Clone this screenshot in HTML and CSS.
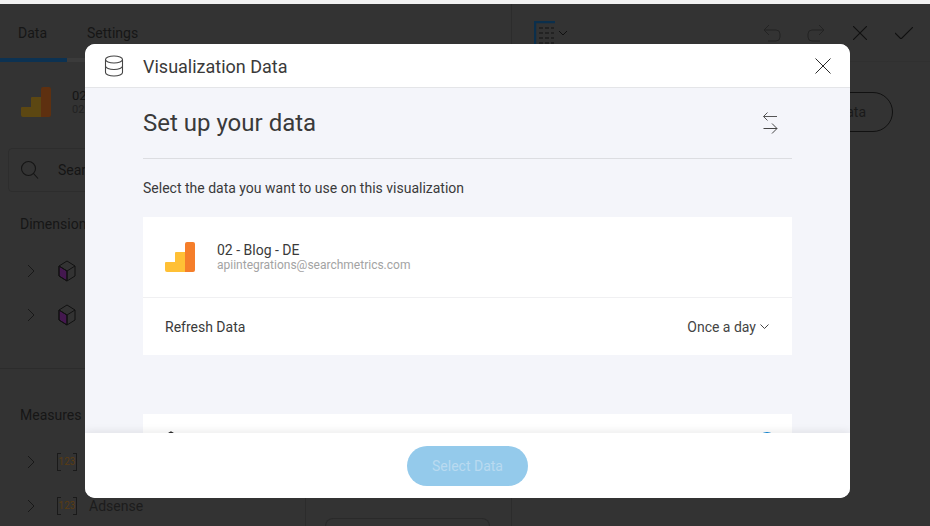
FILE: index.html
```html
<!DOCTYPE html>
<html lang="en">
<head>
<meta charset="utf-8">
<title>Visualization Data</title>
<link rel="stylesheet" href="styles.css">
</head>
<body>
<div class="topstrip"></div>
<div class="app">
  <div class="editor">
    <div class="tabs">
      <div class="tab active">Data</div>
      <div class="tab">Settings</div>
    </div>
    <div class="editor-cols">
      <aside class="left">
        <div class="source">
          <svg width="30" height="30" viewBox="0 0 30 30"><path d="M0 28v-7a1 1 0 0 1 1-1h9v-9a1 1 0 0 1 1-1h9v20H2a2 2 0 0 1-2-2z" fill="#5c4712"/><path d="M20 2a2 2 0 0 1 2-2h6a2 2 0 0 1 2 2v26a2 2 0 0 1-2 2h-8z" fill="#5e3010"/></svg>
          <div class="source-text"><div>02 - Blog - DE</div><div class="source-sub">02 - Blog</div></div>
        </div>
        <div class="search">
          <svg width="20" height="20" viewBox="0 0 20 20" fill="none" stroke="#151515" stroke-width="1.1"><circle cx="8.500" cy="8.500" r="7"/><path d="M13.500 13.500l4.500 5"/></svg>
          <span>Search</span>
        </div>
        <div class="section-title dims">Dimensions</div>
        <div class="field"><svg width="10" height="14" viewBox="0 0 10 14" fill="none" stroke="#181818"><path d="M2 1l6 6-6 6"/></svg><svg width="20" height="22" viewBox="0 0 20 22" fill="none" stroke="#111"><path d="M2 6v10l8 5V11z" fill="#44184f"/><path d="M10 1l8 5v10l-8 5-8-5V6zM2 6l8 5 8-5M10 11v10"/></svg></div>
        <div class="field"><svg width="10" height="14" viewBox="0 0 10 14" fill="none" stroke="#181818"><path d="M2 1l6 6-6 6"/></svg><svg width="20" height="22" viewBox="0 0 20 22" fill="none" stroke="#111"><path d="M2 6v10l8 5V11z" fill="#44184f"/><path d="M10 1l8 5v10l-8 5-8-5V6zM2 6l8 5 8-5M10 11v10"/></svg></div>
        <div class="rule"></div>
        <div class="section-title">Measures</div>
        <div class="field"><svg width="10" height="14" viewBox="0 0 10 14" fill="none" stroke="#181818"><path d="M2 1l6 6-6 6"/></svg><span class="num">123</span><span class="name">Adsense</span></div>
        <div class="field"><svg width="10" height="14" viewBox="0 0 10 14" fill="none" stroke="#181818"><path d="M2 1l6 6-6 6"/></svg><span class="num">123</span><span class="name">Adsense</span></div>
      </aside>
      <section class="middle"><div class="drop"></div></section>
    </div>
  </div>
  <section class="right">
    <div class="toolbar">
      <div class="chart-pick">
        <svg width="21" height="24" viewBox="0 0 21 24"><path d="M1 24V1h20" fill="none" stroke="#0b2f4c" stroke-width="2.400"/><path d="M5 7h4M11 7h4M17 7h3M5 12h4M11 12h4M17 12h3M5 17h4M11 17h4M17 17h3M5 22h4M11 22h4M17 22h3" stroke="#1e1e1e" stroke-width="1.300"/></svg>
        <svg width="10" height="6" viewBox="0 0 10 6" fill="none" stroke="#111"><path d="M1 1l4 4 4-4"/></svg>
      </div>
      <div class="actions">
        <svg class="a-undo" width="18" height="18" viewBox="0 0 18 18" fill="none" stroke="#232323"><path d="M1 6h12a4 4 0 0 1 4 4v3a4 4 0 0 1-4 4H5M6 1L1 6l5 5"/></svg>
        <svg class="a-redo" width="18" height="18" viewBox="0 0 18 18" fill="none" stroke="#232323"><path d="M17 6H5a4 4 0 0 0-4 4v3a4 4 0 0 0 4 4h8M12 1l5 5-5 5"/></svg>
        <svg class="a-close" width="14" height="14" viewBox="0 0 14 14" fill="none" stroke="#101010" stroke-width="1.100"><path d="M0 0l14 14M14 0L0 14"/></svg>
        <svg class="a-check" width="18" height="12" viewBox="0 0 18 12" fill="none" stroke="#101010" stroke-width="1.100"><path d="M0 6l6 6L18 0"/></svg>
      </div>
    </div>
    <div class="add-row"><div class="ghost-btn">Select Data</div></div>
  </section>
</div>

<div class="modal">
  <header class="modal-head">
    <svg width="20" height="22" viewBox="0 0 20 22" fill="none" stroke="#444" stroke-width="1.100"><ellipse cx="10" cy="4.500" rx="8.500" ry="3.500"/><path d="M1.500 4.500v13c0 2 3.800 3.500 8.500 3.500s8.500-1.500 8.500-3.500v-13M1.500 11c0 2 3.800 3.500 8.500 3.500s8.500-1.500 8.500-3.500"/></svg>
    <h1 class="modal-title">Visualization Data</h1>
    <svg width="16" height="16" viewBox="0 0 16 16" fill="none" stroke="#2a2a2a"><path d="M.5.500l15 15M15.500.500l-15 15"/></svg>
  </header>
  <div class="modal-body">
    <div class="setup-head">
      <h2 class="setup-title">Set up your data</h2>
      <svg width="16" height="22" viewBox="0 0 16 22" fill="none" stroke="#555"><path d="M15 4.500H1.500M5.500.500l-4 4 4 4"/><path stroke="#444" d="M1.500 16.500h13.500M10 11.500l5 5-5 5"/></svg>
    </div>
    <p class="hint">Select the data you want to use on this visualization</p>
    <div class="card">
      <div class="account">
        <svg width="30" height="30" viewBox="0 0 30 30"><path d="M0 28v-7a1 1 0 0 1 1-1h9v-9a1 1 0 0 1 1-1h9v20H2a2 2 0 0 1-2-2z" fill="#ffc035"/><path d="M20 2a2 2 0 0 1 2-2h6a2 2 0 0 1 2 2v26a2 2 0 0 1-2 2h-8z" fill="#f57e2a"/></svg>
        <div>
          <div class="account-name">02 - Blog - DE</div>
          <div class="account-mail">apiintegrations@searchmetrics.com</div>
        </div>
      </div>
      <div class="refresh">
        <span>Refresh Data</span>
        <span class="refresh-val">Once a day <svg width="9" height="5" viewBox="0 0 9 5" fill="none" stroke="#444"><path d="M.5.500l4 4 4-4"/></svg></span>
      </div>
    </div>
    <div class="card second">
      <svg width="12" height="14" viewBox="0 0 12 14" fill="none" stroke="#222" stroke-width="1.300"><path d="M6 1l5 3v6l-5 3-5-3V4z"/></svg>
      <span class="radio"></span>
    </div>
  </div>
  <footer class="modal-foot">
    <button class="primary">Select Data</button>
  </footer>
</div>
</body>
</html>
```
FILE: styles.css
```css
* { box-sizing: border-box; }
html, body { margin: 0; height: 100%; }
body {
  background: #333;
  font-family: Roboto, "Liberation Sans", sans-serif;
  color: #151515;
  overflow: hidden;
  width: 930px;
  height: 526px;
}
svg { display: block; flex: none; }
.topstrip { height: 4px; background: #f2f2f2; }
.app { display: flex; height: 522px; overflow: hidden; }
.editor { width: 512px; flex: none; border-right: 1px solid #2c2c2c; }
.editor-cols { display: flex; height: 464px; overflow: hidden; }
.left { width: 306px; flex: none; border-right: 1px solid #2c2c2c; }
.middle { flex: 1; padding: 456px 21px 0 19px; overflow: hidden; }
.drop { height: 8px; border: 1px solid #2a2a2a; border-bottom: 0; border-radius: 8px 8px 0 0; }
.right { flex: 1; }
.tabs { display: flex; height: 58px; border-bottom: 4px solid #3b3b3b; font-size: 14px; }
.tab { padding: 21px 18px 0; color: #161616; }
.tab.active { width: 67px; border-bottom: 4px solid #0c3252; margin-bottom: -4px; height: 58px; }
.tab + .tab { padding-left: 20px; }
.source { display: flex; gap: 21px; padding: 25px 0 0 21px; height: 86px; font-size: 13px; align-items: flex-start; }
.source-text { margin-top: 1px; }
.source-sub { font-size: 11px; color: #222; }
.search { margin: 0 0 0 8px; height: 44px; width: 280px; border: 1px solid #2d2d2d; border-radius: 4px; display: flex; align-items: center; gap: 18px; padding-left: 11px; font-size: 14px; }
.section-title { font-size: 14px; color: #161616; padding-left: 20px; }
.dims { margin-top: 24px; }
.field { display: flex; align-items: center; height: 44px; padding-left: 26px; gap: 21px; font-size: 14px; color: #1c1c1c; }
.dims + .field { margin-top: 17px; }
.rule { height: 1px; background: #2c2c2c; margin: 31px 0 38px; }
.rule + .section-title + .field { margin-top: 17px; }
.num { position: relative; font-size: 10px; color: #5a3c12; width: 20px; height: 18px; line-height: 18px; text-align: center; }
.num::before, .num::after { content: ""; position: absolute; top: 0; bottom: 0; width: 3px; border: 1px solid #1a1a1a; }
.num::before { left: 0; border-right: 0; }
.num::after { right: 0; border-left: 0; }
.name { margin-left: -9px; }
.toolbar { display: flex; justify-content: space-between; align-items: center; height: 58px; padding: 0 17px 0 22px; border-bottom: 1px solid #303030; }
.chart-pick { display: flex; align-items: center; gap: 3px; }
.actions { display: flex; align-items: center; gap: 26px; }
.a-close { margin-left: 2px; }
.a-check { margin-left: 2px; }
.add-row { display: flex; justify-content: flex-end; padding: 30px 37px 0 0; }
.ghost-btn { border: 1px solid #111; border-radius: 20px; height: 40px; padding: 0 26px; font-size: 14px; line-height: 38px; color: #1a1a1a; }

.modal {
  position: absolute;
  left: 85px;
  top: 44px;
  width: 765px;
  height: 454px;
  border-radius: 10px;
  background: #f4f5fa;
  overflow: hidden;
  display: flex;
  flex-direction: column;
}
.modal-head {
  height: 44px;
  flex: none;
  background: #fff;
  border-bottom: 1px solid #e4e5e8;
  display: flex;
  align-items: center;
  padding: 0 19px;
}
.modal-title { margin: 2px 0 0 19px; flex: 1; font-size: 18px; font-weight: 400; color: #3a3a3a; }
.modal-body { flex: 1; min-height: 0; overflow: hidden; padding: 0 58px; }
.setup-head { display: flex; justify-content: space-between; align-items: center; height: 71px; border-bottom: 1px solid #dcdde1; padding-right: 14px; }
.setup-title { margin: 0; font-size: 24px; font-weight: 400; color: #3a3a3a; }
.hint { margin: 21px 0 21px; font-size: 14px; line-height: 16px; color: #3a3a3a; }
.card { background: #fff; }
.account { display: flex; align-items: center; gap: 22px; height: 81px; padding: 0 0 0 22px; border-bottom: 1px solid #f0f0f2; }
.account-name { font-size: 14px; line-height: 16px; color: #3a3a3a; }
.account-mail { font-size: 12px; line-height: 14px; color: #a3a3a3; }
.refresh { display: flex; justify-content: space-between; align-items: center; height: 57px; padding: 0 23px 0 22px; font-size: 14px; color: #3a3a3a; }
.refresh-val { display: flex; align-items: center; gap: 4px; color: #444; }
.second { margin-top: 59px; height: 60px; display: flex; justify-content: space-between; padding: 17px 16px 0 22px; }
.radio { width: 18px; height: 18px; margin-top: 1px; border: 1.5px solid #0a84d6; border-radius: 50%; }
.modal-foot {
  height: 65px;
  flex: none;
  background: #fff;
  box-shadow: 0 -2px 8px rgba(0,0,0,.08);
  display: flex;
  justify-content: center;
  align-items: center;
  position: relative;
}
.primary {
  width: 121px;
  height: 40px;
  border: 0;
  border-radius: 20px;
  background: #94caeb;
  color: #b9daf0;
  font: 14px Roboto, "Liberation Sans", sans-serif;
}
```
